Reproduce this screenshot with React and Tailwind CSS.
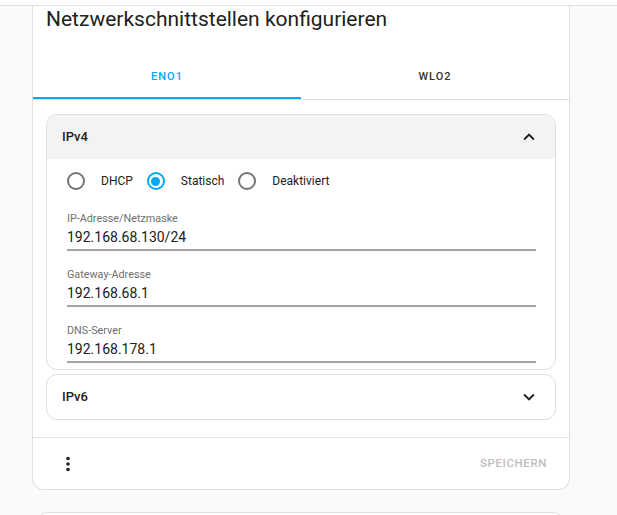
const font = { fontFamily: "Roboto, 'Liberation Sans', sans-serif" }

const ChevronUp = () => (
  <svg viewBox="0 0 24 24" className="h-[22px] w-[22px]" fill="#212121">
    <path d="M7.41,15.41L12,10.83L16.59,15.41L18,14L12,8L6,14L7.41,15.41Z" />
  </svg>
)

const ChevronDown = () => (
  <svg viewBox="0 0 24 24" className="h-[22px] w-[22px]" fill="#212121">
    <path d="M7.41,8.58L12,13.17L16.59,8.58L18,10L12,16L6,10L7.41,8.58Z" />
  </svg>
)

const DotsVertical = () => (
  <svg viewBox="0 0 24 24" className="h-[22px] w-[22px]" fill="#212121">
    <path d="M12,16A2,2 0 0,1 14,18A2,2 0 0,1 12,20A2,2 0 0,1 10,18A2,2 0 0,1 12,16M12,10A2,2 0 0,1 14,12A2,2 0 0,1 12,14A2,2 0 0,1 10,12A2,2 0 0,1 12,10M12,4A2,2 0 0,1 14,6A2,2 0 0,1 12,8A2,2 0 0,1 10,6A2,2 0 0,1 12,4Z" />
  </svg>
)

const Radio = ({ label, checked }) => (
  <div className="flex items-center">
    <div className="flex h-9 w-9 items-center justify-center">
      <div
        className={`flex h-[18px] w-[18px] items-center justify-center rounded-full border-2 ${
          checked ? "border-[#03a9f4]" : "border-[#757575]"
        }`}
      >
        {checked && <div className="h-[9px] w-[9px] rounded-full bg-[#03a9f4]"></div>}
      </div>
    </div>
    <span className="pl-[7px] pr-[5px] text-[12px] text-[#212121]">{label}</span>
  </div>
)

const Field = ({ label, value }) => (
  <div className="border-b-2 border-[#a4a4a4] pb-[3px]">
    <div className="text-[10.8px] leading-[13px] text-[#6f6f6f]">{label}</div>
    <div className="mt-[3px] text-[14px] leading-[18px] text-[#212121]">{value}</div>
  </div>
)

export default function App() {
  const fields = [
    { label: "IP-Adresse/Netzmaske", value: "192.168.68.130/24" },
    { label: "Gateway-Adresse", value: "192.168.68.1" },
    { label: "DNS-Server", value: "192.168.178.1" },
  ]

  return (
    <div className="h-[515px] overflow-hidden bg-[#fafafa]" style={font}>
      <div className="h-[6px] border-b border-[#e0e0e0] bg-white"></div>

      <div className="ml-[32px] w-[538px] rounded-b-[12px] border border-t-0 border-[#e0e0e0] bg-white">
        <div className="h-[50px] pl-[13px]">
          <h1 className="text-[21px] leading-[26px] text-[#212121]">Netzwerkschnittstellen konfigurieren</h1>
        </div>

        <div className="flex border-b border-[#e0e0e0]">
          <button className="flex h-[43px] flex-1 items-center justify-center border-b-2 border-[#03a9f4] pt-[2px] text-[11px] font-medium tracking-[1px] text-[#03a9f4]">
            ENO1
          </button>
          <button className="flex h-[43px] flex-1 items-center justify-center text-[11px] font-medium tracking-[1px] text-[#333333]">
            WLO2
          </button>
        </div>

        <div className="px-[13px] pt-[14px] pb-[17px]">
          <div className="overflow-hidden rounded-[11px] border border-[#e0e0e0]">
            <div className="flex h-[44px] items-center justify-between bg-[#f3f3f3] pl-[15px] pr-[15px]">
              <span className="text-[13px] font-medium text-[#212121]">IPv4</span>
              <ChevronUp />
            </div>
            <div className="pt-[4px] pb-[6px]">
              <div className="flex pl-[11px]">
                <Radio label="DHCP" />
                <Radio label="Statisch" checked />
                <Radio label="Deaktiviert" />
              </div>
              <div className="flex flex-col gap-[17px] pl-[20px] pr-[19px] pt-[13px]">
                {fields.map((f) => (
                  <Field key={f.label} label={f.label} value={f.value} />
                ))}
              </div>
            </div>
          </div>

          <div className="mt-[4px] rounded-[11px] border border-[#e0e0e0]">
            <div className="flex h-[44px] items-center justify-between pl-[15px] pr-[15px]">
              <span className="text-[13px] font-medium text-[#212121]">IPv6</span>
              <ChevronDown />
            </div>
          </div>
        </div>

        <div className="flex h-[52px] items-center justify-between border-t border-[#e0e0e0] pl-[24px] pr-[22px]">
          <DotsVertical />
          <span className="text-[11.5px] font-medium tracking-[0.6px] text-[#bdbdbd]">SPEICHERN</span>
        </div>
      </div>

      <div className="ml-[36px] mt-[22px] h-[20px] w-[529px] rounded-t-[12px] border border-[#e0e0e0] bg-white"></div>
    </div>
  )
}
